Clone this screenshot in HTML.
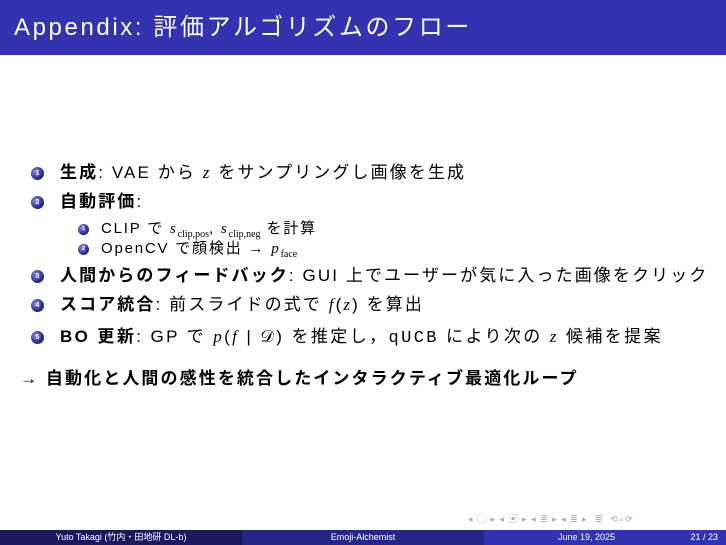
<!DOCTYPE html>
<html><head><meta charset="utf-8"><style>
body{margin:0;width:726px;height:545px;position:relative;background:#fff;font-family:"Liberation Sans","Noto Sans CJK JP",sans-serif;color:#000;overflow:hidden}
.hd{position:absolute;left:0;top:0;width:726px;height:55px;background:#3333b2;color:#fff;font-size:24px;letter-spacing:2.6px;line-height:55px;padding-left:14px;box-sizing:border-box;white-space:nowrap}
.it{position:absolute;left:60px;font-size:17px;letter-spacing:2.1px;white-space:nowrap;line-height:20px}
.sub{left:101px;font-size:15px;letter-spacing:1.8px}
.b{position:absolute;border-radius:50%;background:radial-gradient(circle at 35% 35%,#8a8ae0,#2a2a90 60%,#141460);color:#fff;font-size:7px;text-align:center;font-weight:bold}
.b1{width:13px;height:13px;line-height:13px;left:31px}
.b2{width:11px;height:11px;line-height:11px;left:78px;font-size:6px}
i{font-family:"Liberation Serif",serif}
sub{font-size:10px;font-family:"Liberation Serif",serif;letter-spacing:0}
.ft{position:absolute;top:530px;height:15px;color:#fff;font-size:9px;line-height:15px;text-align:center}
.nav{position:absolute;top:512px;left:468px;font-size:9px;color:#aab;letter-spacing:1px}
</style></head><body>
<div class="hd">Appendix: 評価アルゴリズムのフロー</div>
<div class="b b1" style="top:167px">1</div><div class="it" style="top:163px"><b>生成</b>: VAE から <i>z</i> をサンプリングし画像を生成</div>
<div class="b b1" style="top:196px">2</div><div class="it" style="top:192px"><b>自動評価</b>:</div>
<div class="b b2" style="top:224px">1</div><div class="it sub" style="top:219px">CLIP で <i>s</i><sub>clip,pos</sub>, <i>s</i><sub>clip,neg</sub> を計算</div>
<div class="b b2" style="top:244px">2</div><div class="it sub" style="top:239px">OpenCV で顔検出 → <i>p</i><sub>face</sub></div>
<div class="b b1" style="top:270px">3</div><div class="it" style="top:266px"><b>人間からのフィードバック</b>: GUI 上でユーザーが気に入った画像をクリック</div>
<div class="b b1" style="top:299px">4</div><div class="it" style="top:295px"><b>スコア統合</b>: 前スライドの式で <i>f</i>(<i>z</i>) を算出</div>
<div class="b b1" style="top:331px">5</div><div class="it" style="top:327px;letter-spacing:2.4px"><b>BO 更新</b>: GP で <i>p</i>(<i>f</i> | 𝒟) を推定し，<span style="font-family:'Liberation Mono'">qUCB</span> により次の <i>z</i> 候補を提案</div>
<div class="it" style="left:20px;top:369px;font-weight:bold">→ 自動化と人間の感性を統合したインタラクティブ最適化ループ</div>
<div class="nav">◂ ▢ ▸ ◂ ▣ ▸ ◂ ≣ ▸ ◂ ≣ ▸ &nbsp;≣ &nbsp;⟲⌕⟳</div>
<div class="ft" style="left:0;width:242px;background:#191960">Yuto Takagi (竹内・田地研 DL-b)</div>
<div class="ft" style="left:242px;width:242px;background:#262688">Emoji-Alchemist</div>
<div class="ft" style="left:484px;width:242px;background:#3333b2"><span style="position:absolute;left:74px">June 19, 2025</span><span style="position:absolute;right:8px">21 / 23</span></div>
</body></html>
